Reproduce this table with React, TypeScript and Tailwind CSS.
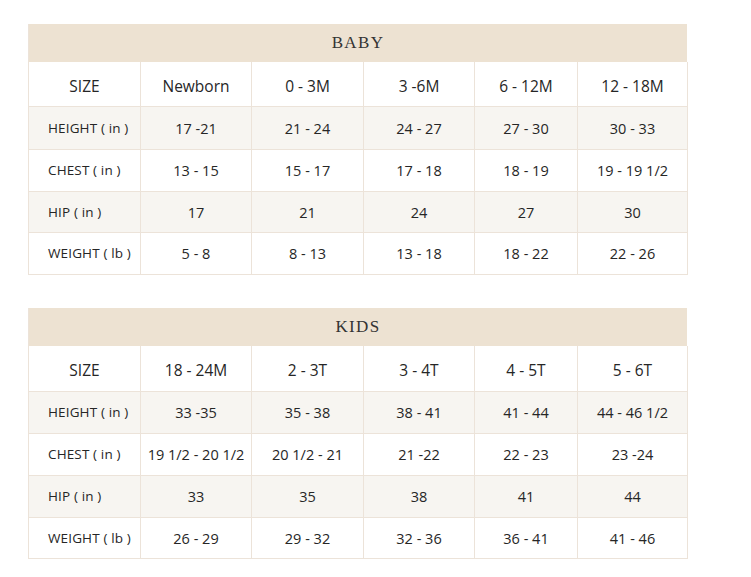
import React from 'react';

interface SizeTableProps {
  title: string;
  sizes: string[];
  rows: { label: string; values: string[] }[];
  rowHeights: number[];
}

const rowHeightClass: Record<number, string> = {
  41: 'h-[41px]',
  42: 'h-[42px]',
  43: 'h-[43px]',
  45: 'h-[45px]',
  46: 'h-[46px]',
};

const cellBorder = 'border-r border-b border-[#ece3d9]';

const SizeTable: React.FC<SizeTableProps> = ({ title, sizes, rows, rowHeights }) => {
  return (
    <div className="w-[659px] border-l border-[#ece3d9] font-['Open_Sans',sans-serif] text-[#262626]">
      <div className="h-[38px] bg-[#ede2d2] flex items-center justify-center font-['Liberation_Serif',serif] text-[17px] tracking-[0.08em] text-[#333]">
        {title}
      </div>
      <div className="grid grid-cols-[112px_111px_112px_111px_103px_110px]">
        {/* size header row */}
        <div className={`${cellBorder} ${rowHeightClass[rowHeights[0]]} flex items-center justify-center pt-[5px] text-[15.5px] bg-white`}>
          SIZE
        </div>
        {sizes.map((s) => (
          <div
            key={s}
            className={`${cellBorder} ${rowHeightClass[rowHeights[0]]} flex items-center justify-center pt-[5px] text-[15.5px] bg-white`}
          >
            {s}
          </div>
        ))}

        {rows.map((row, i) => {
          const bg = i % 2 === 0 ? 'bg-[#f7f5f1]' : 'bg-white';
          const h = rowHeightClass[rowHeights[i + 1]];
          return (
            <React.Fragment key={row.label}>
              <div className={`${cellBorder} ${h} ${bg} flex items-center pl-[19px] text-[13.5px] tracking-[0.01em]`}>
                {row.label}
              </div>
              {row.values.map((v, j) => (
                <div
                  key={j}
                  className={`${cellBorder} ${h} ${bg} flex items-center justify-center pt-[1px] text-[14.5px]`}
                >
                  {v}
                </div>
              ))}
            </React.Fragment>
          );
        })}
      </div>
    </div>
  );
};

export default function App() {
  return (
    <div className="w-[751px] h-[577px] bg-white pt-[24px] pl-[28px] flex flex-col gap-[33px]">
      <SizeTable
        title="BABY"
        sizes={['Newborn', '0 - 3M', '3 -6M', '6 - 12M', '12 - 18M']}
        rowHeights={[45, 43, 42, 41, 42]}
        rows={[
          { label: 'HEIGHT ( in )', values: ['17 -21', '21 - 24', '24 - 27', '27 - 30', '30 - 33'] },
          { label: 'CHEST ( in )', values: ['13 - 15', '15 - 17', '17 - 18', '18 - 19', '19 - 19 1/2'] },
          { label: 'HIP ( in )', values: ['17', '21', '24', '27', '30'] },
          { label: 'WEIGHT ( lb )', values: ['5 - 8', '8 - 13', '13 - 18', '18 - 22', '22 - 26'] },
        ]}
      />
      <SizeTable
        title="KIDS"
        sizes={['18 - 24M', '2 - 3T', '3 - 4T', '4 - 5T', '5 - 6T']}
        rowHeights={[46, 42, 42, 42, 41]}
        rows={[
          { label: 'HEIGHT ( in )', values: ['33 -35', '35 - 38', '38 - 41', '41 - 44', '44 - 46 1/2'] },
          { label: 'CHEST ( in )', values: ['19 1/2 - 20 1/2', '20 1/2 - 21', '21 -22', '22 - 23', '23 -24'] },
          { label: 'HIP ( in )', values: ['33', '35', '38', '41', '44'] },
          { label: 'WEIGHT ( lb )', values: ['26 - 29', '29 - 32', '32 - 36', '36 - 41', '41 - 46'] },
        ]}
      />
    </div>
  );
}
